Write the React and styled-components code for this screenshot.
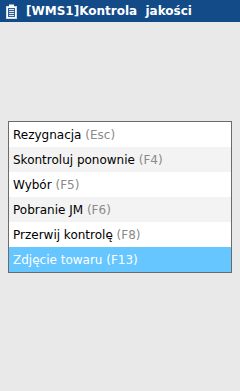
import React from "react";
import styled, { createGlobalStyle } from "styled-components";

const Global = createGlobalStyle`
  html, body { margin: 0; padding: 0; }
  body { background: #e9e9e9; font-family: "DejaVu Sans", Verdana, sans-serif; }
`;

const Page = styled.div`
  width: 240px;
  height: 391px;
  background: #e9e9e9;
  display: flex;
  flex-direction: column;
`;

const TitleBar = styled.div`
  height: 22px;
  background: #134a88;
  color: #fff;
  display: flex;
  align-items: center;
  gap: 9px;
  padding-left: 6px;
  font-weight: bold;
  font-size: 12px;
  white-space: pre;
`;

const Body = styled.div`
  flex: 1;
  padding: 99px 8px 0 8px;
`;

const Menu = styled.div`
  border: 1px solid #6b6b6b;
  background: #fff;
  width: 222px;
`;

const Row = styled.div`
  height: 25px;
  display: flex;
  align-items: center;
  padding-left: 4px;
  font-size: 12px;
  white-space: pre;
  color: ${p => (p.$active ? "#fff" : "#000")};
  background: ${p => (p.$active ? "#66c6ff" : p.$alt ? "#f3f3f3" : "#fff")};
`;

const Key = styled.span`
  color: ${p => (p.$active ? "#fff" : "#8a8a8a")};
`;

const Icon = () => (
  <svg width="11" height="15" viewBox="0 0 11 15">
    <rect x="0.5" y="2.5" width="10" height="12" fill="#fff" stroke="#cfd8e6" />
    <rect x="2" y="4" width="7" height="9" fill="#2f5f9a" />
    <rect x="3" y="5" width="5" height="1" fill="#e0e8f2" />
    <rect x="3" y="7" width="5" height="1" fill="#e0e8f2" />
    <rect x="3" y="9" width="5" height="1" fill="#e0e8f2" />
    <rect x="3" y="11" width="5" height="1" fill="#e0e8f2" />
    <rect x="3" y="0.5" width="5" height="3" fill="#fff" />
  </svg>
);

const items = [
  ["Rezygnacja", "(Esc)"],
  ["Skontroluj ponownie", "(F4)"],
  ["Wybór", "(F5)"],
  ["Pobranie JM", "(F6)"],
  ["Przerwij kontrolę", "(F8)"],
  ["Zdjęcie towaru", "(F13)"],
];

export default function App() {
  return (
    <Page>
      <Global />
      <TitleBar>
        <Icon />
        <span>[WMS1]Kontrola  jakości</span>
      </TitleBar>
      <Body>
        <Menu>
          {items.map(([label, key], i) => {
            const active = i === items.length - 1;
            return (
              <Row key={label} $alt={i % 2 === 1} $active={active}>
                {label} <Key $active={active}>{key}</Key>
              </Row>
            );
          })}
        </Menu>
      </Body>
    </Page>
  );
}
